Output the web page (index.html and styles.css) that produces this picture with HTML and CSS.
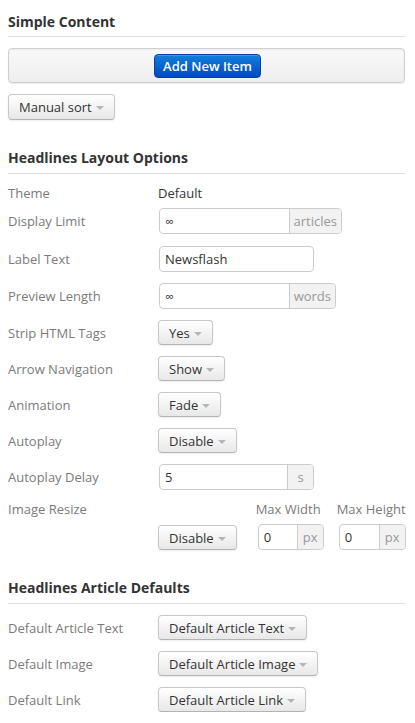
FILE: index.html
```html
<!DOCTYPE html>
<html>
<head>
<meta charset="utf-8">
<link rel="stylesheet" href="styles.css">
</head>
<body>
<div class="page">
  <h3 class="heading first">Simple Content</h3>
  <div class="well">
    <button class="btn btn-primary">Add New Item</button>
  </div>
  <div class="sort-row">
    <button class="btn">Manual sort<span class="caret"></span></button>
  </div>

  <h3 class="heading">Headlines Layout Options</h3>
  <div class="rows">
    <div class="row row-theme">
      <span class="label">Theme</span>
      <span class="value">Default</span>
    </div>
    <div class="row row-first">
      <span class="label">Display Limit</span>
      <div class="input-group w-183"><span class="field inf">∞</span><span class="addon">articles</span></div>
    </div>
    <div class="row row-plus">
      <span class="label">Label Text</span>
      <div class="input-group w-155"><span class="field">Newsflash</span></div>
    </div>
    <div class="row">
      <span class="label">Preview Length</span>
      <div class="input-group w-177"><span class="field inf">∞</span><span class="addon">words</span></div>
    </div>
    <div class="row">
      <span class="label">Strip HTML Tags</span>
      <button class="btn">Yes<span class="caret"></span></button>
    </div>
    <div class="row">
      <span class="label">Arrow Navigation</span>
      <button class="btn">Show<span class="caret"></span></button>
    </div>
    <div class="row">
      <span class="label">Animation</span>
      <button class="btn">Fade<span class="caret"></span></button>
    </div>
    <div class="row">
      <span class="label">Autoplay</span>
      <button class="btn">Disable<span class="caret"></span></button>
    </div>
    <div class="row">
      <span class="label">Autoplay Delay</span>
      <div class="input-group w-155"><span class="field">5</span><span class="addon addon-s">s</span></div>
    </div>
    <div class="row row-resize">
      <span class="label label-top">Image Resize</span>
      <button class="btn">Disable<span class="caret"></span></button>
      <div class="dim dim-w">
        <span class="dim-label">Max Width</span>
        <div class="input-group w-66"><span class="field">0</span><span class="addon addon-px">px</span></div>
      </div>
      <div class="dim dim-h">
        <span class="dim-label">Max Height</span>
        <div class="input-group w-67"><span class="field">0</span><span class="addon addon-px">px</span></div>
      </div>
    </div>
  </div>

  <h3 class="heading">Headlines Article Defaults</h3>
  <div class="rows">
    <div class="row row-first">
      <span class="label">Default Article Text</span>
      <button class="btn">Default Article Text<span class="caret"></span></button>
    </div>
    <div class="row">
      <span class="label">Default Image</span>
      <button class="btn">Default Article Image<span class="caret"></span></button>
    </div>
    <div class="row">
      <span class="label">Default Link</span>
      <button class="btn">Default Article Link<span class="caret"></span></button>
    </div>
  </div>
</div>
</body>
</html>
```

FILE: styles.css
```css
* { box-sizing: border-box; }
html, body { margin: 0; padding: 0; background: #fff; }
body {
  font-family: "Open Sans", "Liberation Sans", sans-serif;
  font-size: 13px;
  color: #333;
}
.page { padding: 0 10px 0 8px; }

.heading {
  margin: 28px 0 0;
  font-size: 14px;
  font-weight: 700;
  line-height: 20px;
  color: #333;
  padding-bottom: 5px;
  border-bottom: 1px solid #ddd;
}
.heading.first { margin-top: 12px; padding-bottom: 4px; }

.well {
  margin-top: 11px;
  height: 35px;
  border: 1px solid #cfcfcf;
  border-radius: 4px;
  background: linear-gradient(#f9f9f9, #eeeeee);
  box-shadow: inset 0 1px 2px rgba(0,0,0,0.06), 0 1px 1px rgba(0,0,0,0.08);
  display: flex;
  justify-content: center;
  align-items: center;
}

.btn {
  display: inline-flex;
  align-items: center;
  height: 25px;
  padding: 0 10px;
  font-family: inherit;
  font-size: 13px;
  color: #333;
  border: 1px solid #c8c8c8;
  border-bottom-color: #b3b3b3;
  border-radius: 4px;
  background: linear-gradient(#ffffff, #e8e8e8);
  box-shadow: inset 0 1px 0 rgba(255,255,255,0.3), 0 1px 2px rgba(0,0,0,0.08);
  white-space: nowrap;
}
.btn-primary {
  width: 107px;
  height: 24px;
  padding: 0;
  justify-content: center;
  color: #fff;
  font-weight: 600;
  font-size: 13px;
  border-color: #0a3f9e;
  background: linear-gradient(#1180d9, #0148c4);
  box-shadow: inset 0 1px 0 rgba(255,255,255,0.2);
  margin-left: 2px;
  margin-top: 1px;
}
.sort-row { margin-top: 11px; }
.sort-row .btn { height: 26px; }

.caret {
  display: inline-block;
  width: 0; height: 0;
  margin-left: 4px;
  margin-top: 2px;
  border-left: 4px solid transparent;
  border-right: 4px solid transparent;
  border-top: 4px solid #b5b5b5;
}

.rows { display: flex; flex-direction: column; }
.row {
  display: flex;
  align-items: center;
  margin-top: 11px;
}
.row-theme { margin-top: 6px; height: 26px; }
.rows .row-theme + .row { margin-top: 2px; }
.row-plus { margin-top: 12px; }
.label {
  width: 150px;
  flex: none;
  color: #7b7b7b;
}
.value { color: #333; }

.input-group {
  display: flex;
  height: 26px;
  border: 1px solid #ccc;
  border-radius: 4px;
  overflow: hidden;
  background: #fff;
  margin-left: 1px;
}
.field {
  flex: 1;
  display: flex;
  align-items: center;
  padding-left: 5px;
  color: #333;
}
.field.inf { font-size: 12px; }
.addon {
  display: flex;
  align-items: center;
  justify-content: center;
  background: #f2f2f2;
  border-left: 1px solid #ccc;
  color: #999;
  padding: 0 4px;
}
.addon-s { width: 26px; }
.addon-px { width: 26px; padding: 0; }
.w-183 { width: 183px; }
.w-155 { width: 155px; }
.w-177 { width: 177px; }
.w-66 { width: 66px; }
.w-67 { width: 67px; }

.row-resize { align-items: flex-end; margin-top: 9px; }
.label-top { align-self: flex-start; line-height: 20px; }
.dim { display: flex; flex-direction: column; }
.dim-label { color: #7b7b7b; line-height: 20px; margin-bottom: 5px; }
.dim-w { margin-left: 20px; }
.dim-w .dim-label { margin-left: -1px; }
.dim-h { margin-left: 14px; }
.dim-h .dim-label { margin-left: -1px; white-space: nowrap; }
.row-resize .btn { margin-bottom: 0; }
```
